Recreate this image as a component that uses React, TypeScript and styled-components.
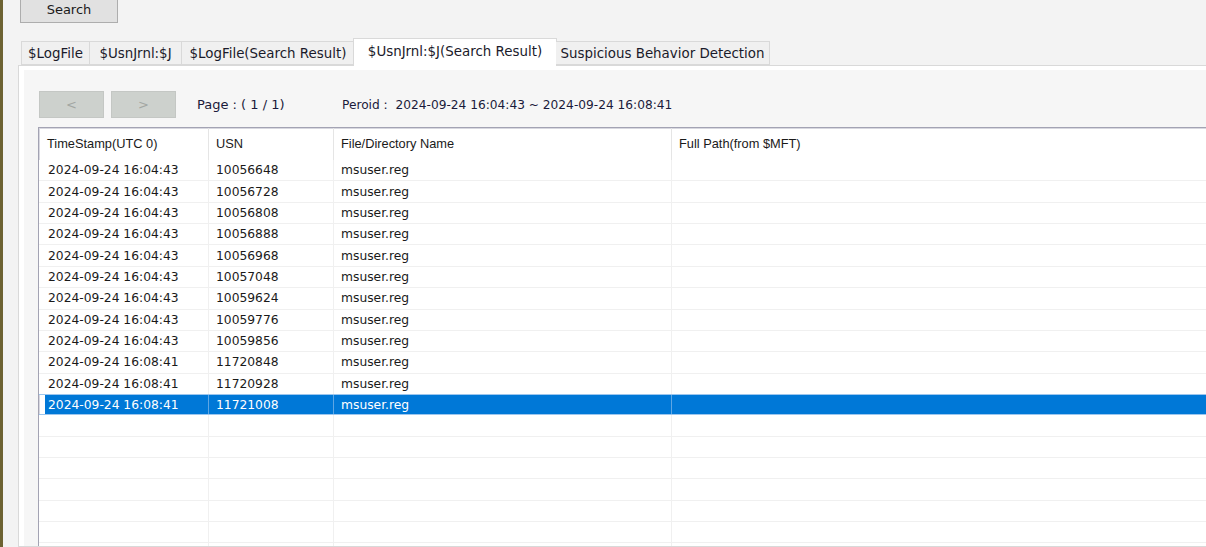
import React from 'react';
import styled, { createGlobalStyle } from 'styled-components';

const GlobalStyle = createGlobalStyle`
	html, body {
		margin: 0;
		padding: 0;
		background: #f3f3f3;
	}
	#root {
		width: 1206px;
		height: 547px;
		overflow: hidden;
	}
`;

const uiFont = `"DejaVu Sans", "Liberation Sans", sans-serif`;

const Window = styled.div`
	width: 1206px;
	height: 547px;
	overflow: hidden;
	box-sizing: border-box;
	border-left: 3px solid #6d6232;
	background: #f3f3f3;
	display: flex;
	flex-direction: column;
	font-family: ${uiFont};
	color: #1a1a1a;
`;

const TopBar = styled.div`
	padding-left: 17px;
	height: 36px;
	display: flex;
	align-items: flex-start;
`;

const PushButton = styled.button`
	margin-top: -2px;
	width: 98px;
	height: 25px;
	box-sizing: border-box;
	border: 1px solid #adadad;
	background: #e1e1e1;
	font-family: ${uiFont};
	font-size: 13px;
	color: #1a1a1a;
	padding: 0 0 3px;
`;

const TabStrip = styled.div`
	display: flex;
	align-items: flex-end;
	padding-left: 16px;
	height: 29px;
	position: relative;
	z-index: 1;
`;

const Tab = styled.div<{ active?: boolean; w: number }>`
	box-sizing: border-box;
	width: ${({ w }) => w}px;
	height: ${({ active }) => (active ? '28px' : '24px')};
	margin: ${({ active }) => (active ? '0 -1px -1px -2px' : '0')};
	display: flex;
	align-items: center;
	justify-content: center;
	font-size: 13.4px;
	white-space: nowrap;
	border: 1px solid #d9d9d9;
	border-bottom: ${({ active }) => (active ? 'none' : '1px solid #d9d9d9')};
	border-left: ${({ active }) => (active ? '1px solid #d9d9d9' : 'none')};
	background: ${({ active }) => (active ? '#ffffff' : '#f0f0f0')};
	color: #1a1a2a;
	padding-bottom: ${({ active }) => (active ? '3px' : '0')};
	&:first-child {
		border-left: 1px solid #d9d9d9;
		margin-left: 2px;
	}
`;

const Panel = styled.div`
	flex: 1;
	margin-left: 15px;
	margin-right: -20px;
	border: 1px solid #d9d9d9;
	border-right: none;
	background: #ffffff;
	padding: 4px 0 0 5px;
	display: flex;
	min-height: 0;
`;

const PanelBody = styled.div`
	flex: 1;
	background: #f6f6f6;
	padding: 21px 0 0 14px;
	display: flex;
	flex-direction: column;
	min-height: 0;
`;

const Pager = styled.div`
	display: flex;
	align-items: center;
	height: 27px;
	padding-left: 1px;
	color: #1a1a3a;
`;

const NavButton = styled.button`
	width: 65px;
	height: 27px;
	box-sizing: border-box;
	border: 1px solid #c4c7c4;
	background: #cdd1cd;
	color: #a2a6a2;
	font-family: ${uiFont};
	font-size: 13px;
	padding: 0;
	margin-right: 7px;
`;

const PageLabel = styled.span`
	margin-left: 14px;
	width: 145px;
	font-size: 13px;
`;

const PeriodLabel = styled.span`
	white-space: nowrap;
	font-size: 12.2px;
`;

const ListView = styled.div`
	margin-top: 9px;
	flex: 1;
	background: #ffffff;
	border-top: 1px solid #a3a3b3;
	border-left: 1px solid #a3a3b3;
	box-shadow: inset 1px 1px 0 #d8d8e0;
	overflow: hidden;
`;

const columns = '170px 125px 338px 1fr';

const HeaderRow = styled.div`
	display: grid;
	grid-template-columns: ${columns};
	height: 32px;
	font-family: "Liberation Sans", Arial, sans-serif;
	font-size: 12.8px;
	color: #1a1a1a;
`;

const HeaderCell = styled.div`
	display: flex;
	align-items: center;
	padding: 0 0 2px 7px;
	border-right: 1px solid #e5e5e5;
	&:first-child {
		padding-left: 8px;
	}
`;

const Row = styled.div<{ selected?: boolean }>`
	display: grid;
	grid-template-columns: ${columns};
	height: 21.36px;
	box-sizing: border-box;
	border-bottom: 1px solid ${({ selected }) => (selected ? '#9cc6ee' : '#f0f0f0')};
	border-top: ${({ selected }) => (selected ? '1px solid #9cc6ee' : 'none')};
	margin-top: ${({ selected }) => (selected ? '-1px' : '0')};
	background: ${({ selected }) =>
		selected ? 'linear-gradient(to right, transparent 6px, #0078d7 6px)' : '#ffffff'};
	color: ${({ selected }) => (selected ? '#ffffff' : '#1a1a1a')};
	font-size: 12.3px;
`;

const Cell = styled.div<{ selected?: boolean }>`
	display: flex;
	align-items: center;
	padding-left: 7px;
	white-space: nowrap;
	overflow: hidden;
	border-right: 1px solid ${({ selected }) => (selected ? '#5ea6e4' : '#f0f0f0')};
	&:first-child {
		padding-left: 9px;
	}
`;

const rows: [string, string, string][] = [
	['2024-09-24 16:04:43', '10056648', 'msuser.reg'],
	['2024-09-24 16:04:43', '10056728', 'msuser.reg'],
	['2024-09-24 16:04:43', '10056808', 'msuser.reg'],
	['2024-09-24 16:04:43', '10056888', 'msuser.reg'],
	['2024-09-24 16:04:43', '10056968', 'msuser.reg'],
	['2024-09-24 16:04:43', '10057048', 'msuser.reg'],
	['2024-09-24 16:04:43', '10059624', 'msuser.reg'],
	['2024-09-24 16:04:43', '10059776', 'msuser.reg'],
	['2024-09-24 16:04:43', '10059856', 'msuser.reg'],
	['2024-09-24 16:08:41', '11720848', 'msuser.reg'],
	['2024-09-24 16:08:41', '11720928', 'msuser.reg'],
	['2024-09-24 16:08:41', '11721008', 'msuser.reg'],
];

const tabs: { label: string; width: number }[] = [
	{ label: '$LogFile', width: 69 },
	{ label: '$UsnJrnl:$J', width: 92 },
	{ label: '$LogFile(Search Result)', width: 173 },
	{ label: '$UsnJrnl:$J(Search Result)', width: 204 },
	{ label: 'Suspicious Behavior Detection', width: 214 },
];

const EMPTY_ROWS = 10;

export default function App() {
	return (
		<>
			<GlobalStyle />
			<Window>
				<TopBar>
					<PushButton>Search</PushButton>
				</TopBar>
				<TabStrip>
					{tabs.map((t, i) => (
						<Tab key={t.label} w={t.width} active={i === 3}>{t.label}</Tab>
					))}
				</TabStrip>
				<Panel>
					<PanelBody>
						<Pager>
							<NavButton disabled>&lt;</NavButton>
							<NavButton disabled>&gt;</NavButton>
							<PageLabel>Page : ( 1 / 1)</PageLabel>
							<PeriodLabel>Peroid :&nbsp; 2024-09-24 16:04:43 ~ 2024-09-24 16:08:41</PeriodLabel>
						</Pager>
						<ListView>
							<HeaderRow>
								<HeaderCell>TimeStamp(UTC 0)</HeaderCell>
								<HeaderCell>USN</HeaderCell>
								<HeaderCell>File/Directory Name</HeaderCell>
								<HeaderCell>Full Path(from $MFT)</HeaderCell>
							</HeaderRow>
							{rows.map(([ts, usn, name], i) => {
								const selected = i === rows.length - 1;
								return (
									<Row key={usn} selected={selected}>
										<Cell selected={selected}>{ts}</Cell>
										<Cell selected={selected}>{usn}</Cell>
										<Cell selected={selected}>{name}</Cell>
										<Cell selected={selected} />
									</Row>
								);
							})}
							{Array.from({ length: EMPTY_ROWS }).map((_, i) => (
								<Row key={`empty-${i}`}>
									<Cell />
									<Cell />
									<Cell />
									<Cell />
								</Row>
							))}
						</ListView>
					</PanelBody>
				</Panel>
			</Window>
		</>
	);
}
